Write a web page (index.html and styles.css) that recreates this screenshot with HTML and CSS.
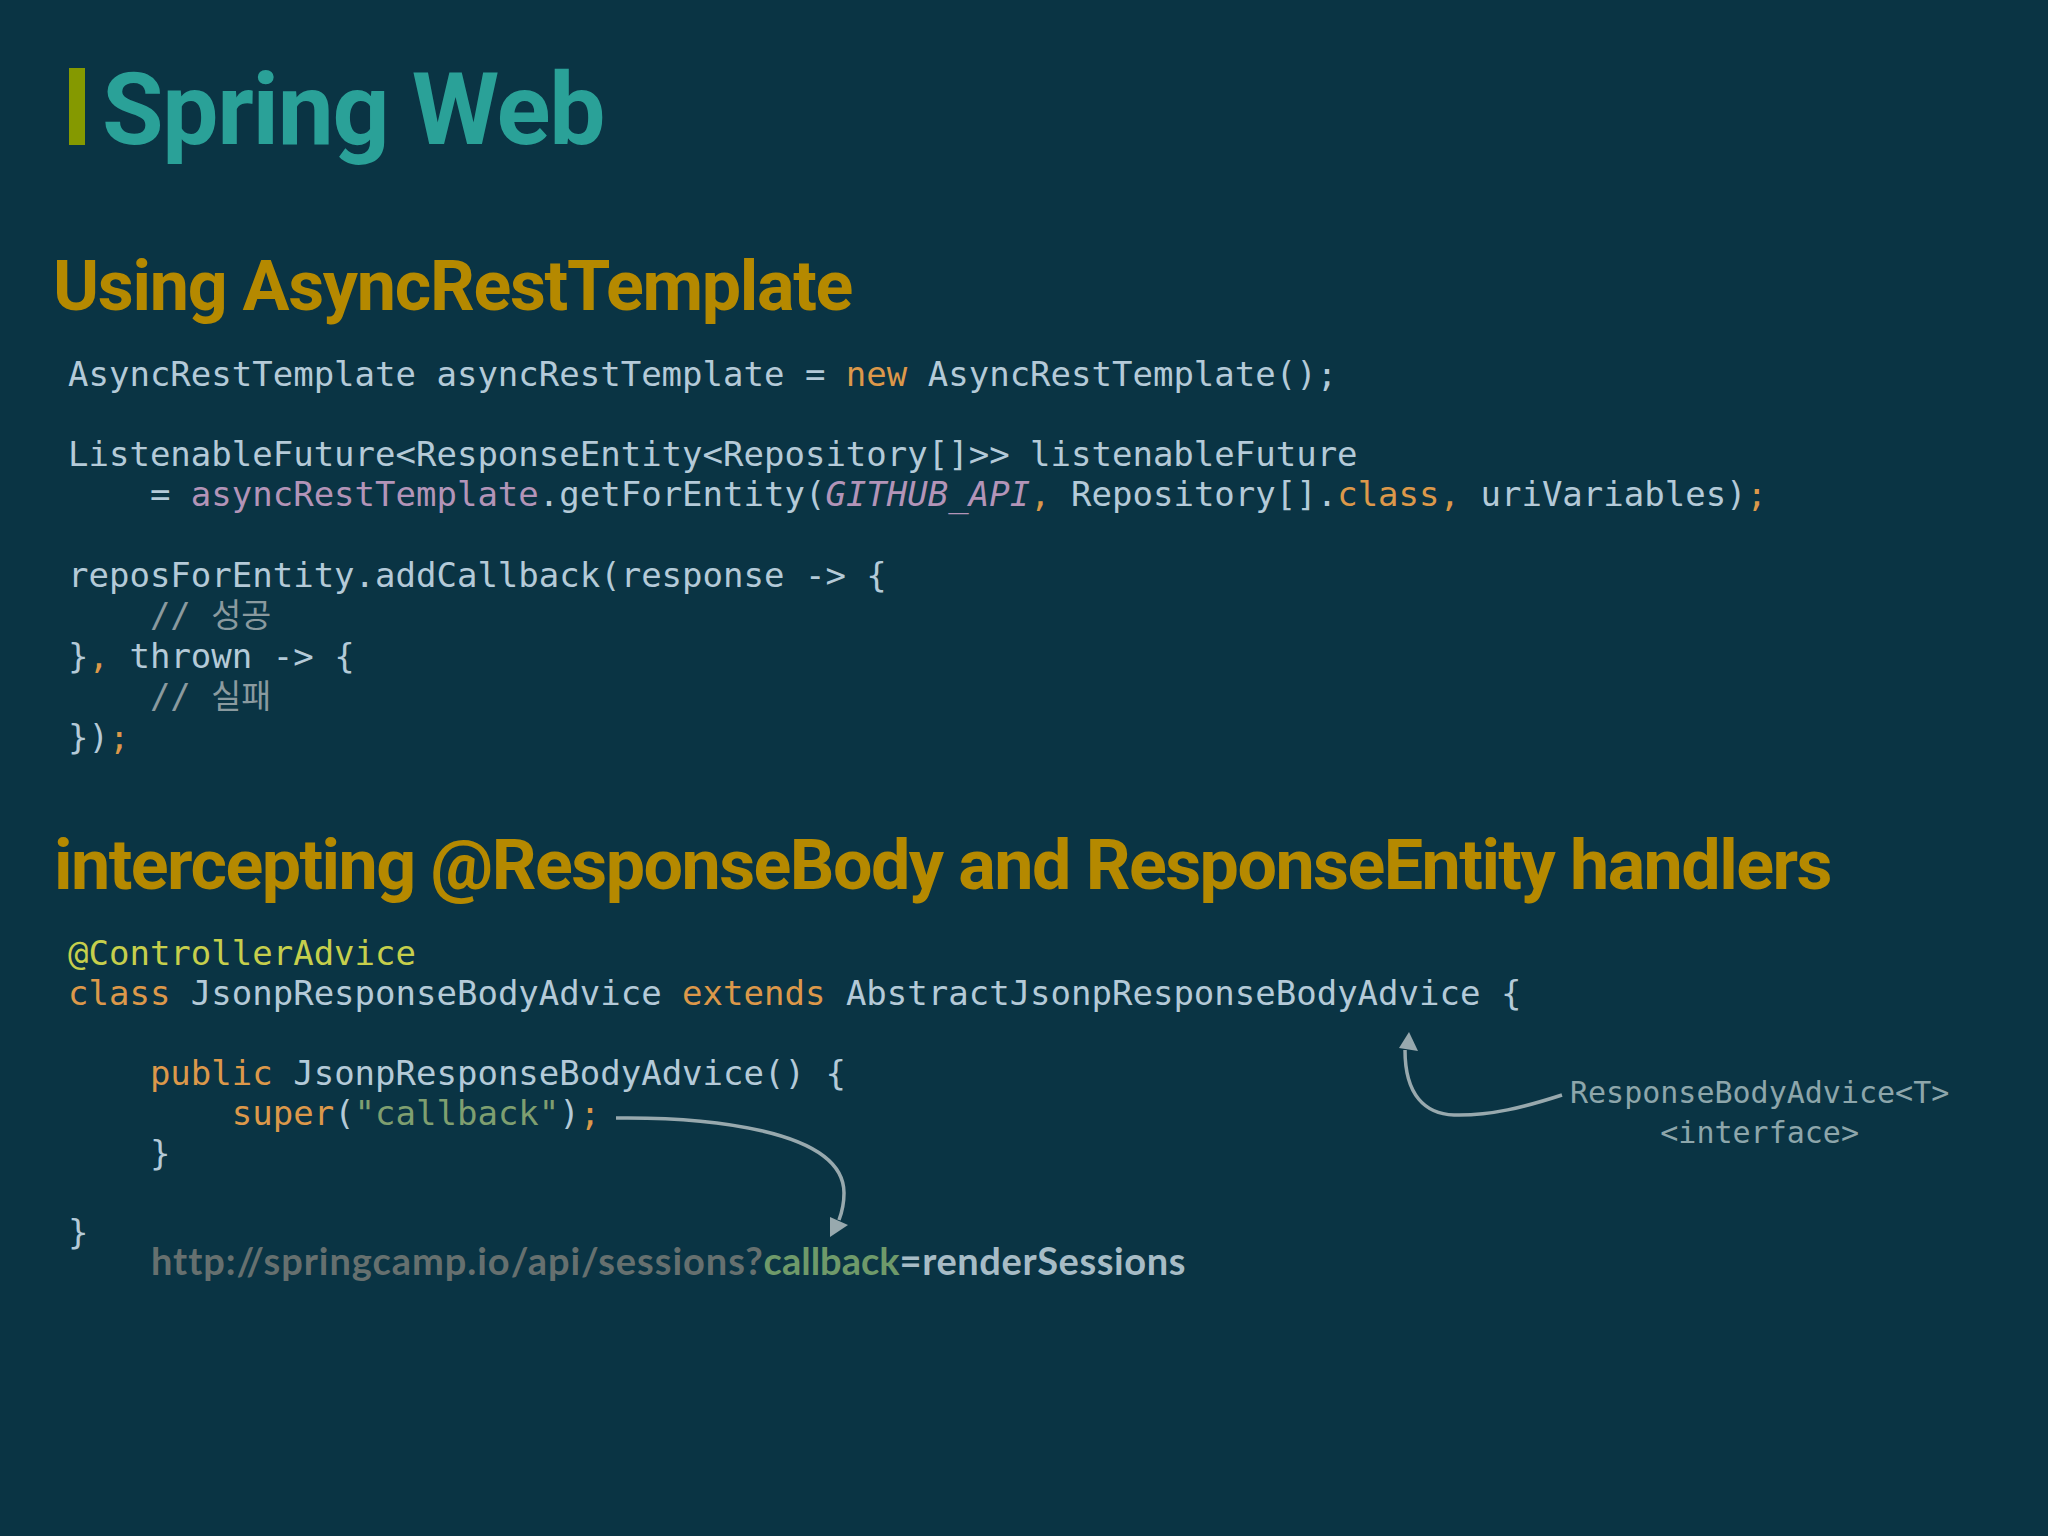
FILE: index.html
```html
<!DOCTYPE html>
<html lang="en">
<head>
<meta charset="utf-8">
<title>Spring Web</title>
<link rel="stylesheet" href="styles.css">
</head>
<body>
<main class="slide">
  <h1 class="title"><span class="title-bar"></span><span class="title-text">Spring Web</span></h1>

  <h2 class="heading heading-first">Using AsyncRestTemplate</h2>
  <pre class="code code-first">AsyncRestTemplate asyncRestTemplate = <span class="kw">new</span> AsyncRestTemplate();

ListenableFuture&lt;ResponseEntity&lt;Repository[]&gt;&gt; listenableFuture
    = <span class="field">asyncRestTemplate</span>.getForEntity(<em class="field">GITHUB_API</em><span class="kw">,</span> Repository[].<span class="kw">class,</span> uriVariables)<span class="kw">;</span>

reposForEntity.addCallback(response -&gt; {
    <span class="comment">// <span class="ko">성공</span></span>
}<span class="kw">,</span> thrown -&gt; {
    <span class="comment">// <span class="ko">실패</span></span>
})<span class="kw">;</span></pre>

  <h2 class="heading heading-second">intercepting @ResponseBody and ResponseEntity handlers</h2>
  <pre class="code code-second"><span class="anno">@ControllerAdvice</span>
<span class="kw">class</span> JsonpResponseBodyAdvice <span class="kw">extends</span> AbstractJsonpResponseBodyAdvice {

    <span class="kw">public</span> JsonpResponseBodyAdvice() {
        <span class="kw">super</span>(<span class="str">"callback"</span>)<span class="kw">;</span>
    }

}</pre>
  <p class="url"><span class="url-base">http://springcamp.io/api/sessions?</span><span class="url-key">callback</span><span class="url-rest">=renderSessions</span></p>

  <svg class="arrows" viewBox="0 0 2048 1536" aria-hidden="true">
    <path class="arrow-line" d="M1562 1095 C1525 1107 1490 1116 1454 1115 C1425 1114 1405 1095 1405 1050"/>
    <path class="arrow-head" d="M1409 1032 L1418 1051 L1399 1048 Z"/>
    <path class="arrow-line" d="M616 1118 C700 1117 844 1128 844 1193 C844 1203 842 1212 839 1220"/>
    <path class="arrow-head" d="M830 1237 L830 1217 L848 1225 Z"/>
  </svg>
  <div class="note">ResponseBodyAdvice&lt;T&gt;<br>&lt;interface&gt;</div>
</main>
</body>
</html>
```
FILE: styles.css
```css
* { box-sizing: border-box; }
html, body { margin: 0; padding: 0; }
body { background: #0a3444; }
.slide {
  position: relative;
  width: 2048px;
  height: 1536px;
  padding: 0 0 0 54px;
  overflow: hidden;
  background: #0a3444;
}
.title {
  display: flex;
  align-items: flex-start;
  gap: 17px;
  margin: 0;
  padding: 68px 0 0 15px;
  height: 243.5px;
  font: 700 100px/1 "Roboto", sans-serif;
  color: #2aa198;
}
.title-bar {
  display: block;
  flex: none;
  width: 16px;
  height: 77px;
  background: #859900;
}
.title-text { display: block; margin-top: -8px; letter-spacing: -1.3px; }
.heading {
  margin: 0 0 0 -1px;
  font: 700 70px/84px "Roboto", sans-serif;
  color: #b58900;
  white-space: nowrap;
}
.heading-first { letter-spacing: -1.3px; }
.heading-second { margin-top: 65px; margin-left: 0; letter-spacing: -1.55px; }
.code {
  margin: 0;
  padding-left: 14px;
  font: 400 34px/40.2px "DejaVu Sans Mono", "Noto Sans CJK KR", monospace;
  color: #b4cad8;
}
.code-first { margin-top: 26px; }
.code-second { margin-top: 27.5px; line-height: 39.9px; }
.code em { font-style: italic; }
.ko { font-size: 32.6px; }
.kw { color: #dc984a; }
.field { color: #b394b8; }
.comment { color: #8a9a9f; }
.anno { color: #c6cf4c; }
.str { color: #7f9f70; }
.url {
  margin: -16px 0 0 97px;
  font: 700 38px/46px "Lato", sans-serif;
  white-space: nowrap;
}
.url-base { color: #66706f; letter-spacing: 0.95px; }
.url-key { color: #6f9a6a; }
.url-rest { color: #a7bcc6; letter-spacing: 0.6px; }
.arrows {
  position: absolute;
  left: 0;
  top: 0;
  width: 2048px;
  height: 1536px;
  pointer-events: none;
}
.arrow-line { fill: none; stroke: #98a9ae; stroke-width: 3.5px; }
.arrow-head { fill: #98a9ae; }
.note {
  position: absolute;
  left: 1570px;
  top: 1073px;
  font: 400 30px/40px "DejaVu Sans Mono", monospace;
  color: #8da6ab;
  text-align: center;
}
```
